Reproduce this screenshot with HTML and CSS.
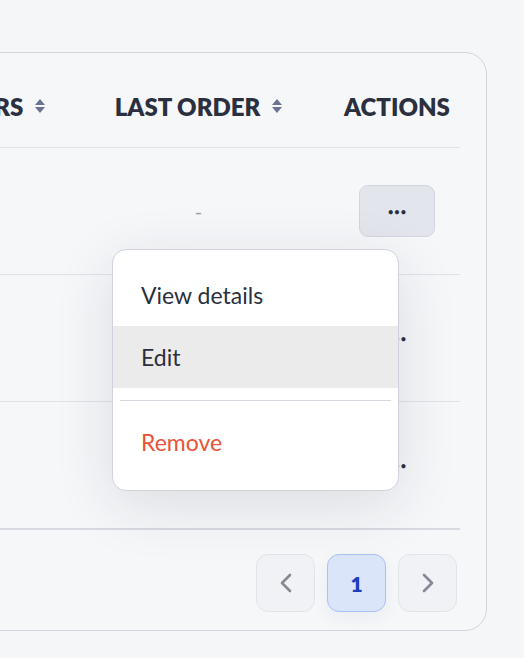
FILE: index.html
```html
<!DOCTYPE html>
<html lang="en">
<head>
    <meta charset="UTF-8">
    <meta name="viewport" content="width=device-width, initial-scale=1.0">
    <title>Customers</title>
    <link rel="stylesheet" href="styles.css">
</head>
<body>

<div class="page">
    <div class="card">
        <div class="table">
            <div class="row head">
                <div class="cell">Orders <svg class="sort" viewBox="0 0 10 16" width="10" height="16"><path d="M5 1 L10 7 H0 Z M5 15 L10 9 H0 Z" fill="#6b7391"/></svg></div>
                <div class="cell">Last order <svg class="sort" viewBox="0 0 10 16" width="10" height="16"><path d="M5 1 L10 7 H0 Z M5 15 L10 9 H0 Z" fill="#6b7391"/></svg></div>
                <div class="cell">Actions</div>
            </div>
            <div class="row">
                <div class="cell">0</div>
                <div class="cell muted">-</div>
                <div class="cell"><button class="more open">&bull;&bull;&bull;</button></div>
            </div>
            <div class="row">
                <div class="cell">3</div>
                <div class="cell muted">-</div>
                <div class="cell"><button class="more">&bull;&bull;&bull;</button></div>
            </div>
            <div class="row last">
                <div class="cell">1</div>
                <div class="cell muted">-</div>
                <div class="cell"><button class="more">&bull;&bull;&bull;</button></div>
            </div>
        </div>
        <div class="footer">
            <div class="pager">
                <button class="page-btn">
                    <svg viewBox="0 0 12 20" width="12" height="20"><path d="M10 2 L2 10 L10 18" fill="none" stroke="#878894" stroke-width="2.6" stroke-linecap="round" stroke-linejoin="round"/></svg>
                </button>
                <button class="page-btn active">1</button>
                <button class="page-btn">
                    <svg viewBox="0 0 12 20" width="12" height="20"><path d="M2 2 L10 10 L2 18" fill="none" stroke="#878894" stroke-width="2.6" stroke-linecap="round" stroke-linejoin="round"/></svg>
                </button>
            </div>
        </div>
    </div>

    <div class="menu">
        <div class="menu-item">View details</div>
        <div class="menu-item hover">Edit</div>
        <div class="menu-sep"></div>
        <div class="menu-item danger">Remove</div>
    </div>
</div>

</body>
</html>
```

FILE: styles.css
```css
* {
    box-sizing: border-box;
}
body {
    margin: 0;
    background-color: #f5f6f8;
    font-family: Lato, "Open Sans", sans-serif;
    color: #2b3040;
    overflow: hidden;
}
.page {
    position: relative;
    height: 658px;
    padding-top: 52px;
}
.card {
    width: 607px;
    margin-left: -120px;
    background-color: #f6f7f9;
    border: 1px solid #d3d6df;
    border-radius: 22px;
    padding: 0 26px;
}
.row {
    display: grid;
    grid-template-columns: 158px 267px 130px;
    height: 127px;
    align-items: center;
    border-bottom: 1px solid #dfe1e8;
}
.row.head {
    height: 95px;
    padding-top: 12px;
}
.row.last {
    height: 128px;
    border-bottom: 2px solid #d8dae2;
}
.cell {
    display: flex;
    align-items: center;
    justify-content: center;
    gap: 12px;
    font-size: 20px;
}
.head .cell {
    font-size: 24px;
    font-weight: 800;
    text-transform: uppercase;
}
.muted {
    color: #9aa0ad;
}
.more {
    width: 76px;
    height: 52px;
    border: 1px solid transparent;
    border-radius: 9px;
    background: transparent;
    color: #2b3040;
    font-size: 11px;
    font-family: inherit;
    padding: 0;
}
.more.open {
    background-color: #e2e5ec;
    border-color: #d3d6e0;
}
.footer {
    height: 100px;
    padding-top: 24px;
    display: flex;
    justify-content: flex-end;
}
.pager {
    display: flex;
    gap: 12px;
    margin-right: 3px;
}
.page-btn {
    width: 59px;
    height: 58px;
    border: 1px solid #e2e4ea;
    border-radius: 12px;
    background-color: #f1f2f5;
    display: flex;
    align-items: center;
    justify-content: center;
    font-family: inherit;
    padding: 0;
}
.page-btn.active {
    background-color: #dbe5fa;
    border-color: #a8c0f4;
    color: #1c3fbe;
    font-size: 21px;
    font-weight: 800;
    box-shadow: 0 6px 18px rgba(30, 40, 80, 0.05);
}
.menu {
    position: absolute;
    left: 112px;
    top: 249px;
    width: 287px;
    background-color: #fff;
    border: 1px solid #d0d3de;
    border-radius: 14px;
    padding: 14px 0 17px;
    box-shadow: 0 14px 60px rgba(30, 35, 60, 0.12);
}
.menu-item {
    height: 62px;
    display: flex;
    align-items: center;
    padding-left: 28px;
    font-size: 23px;
    color: #2b3040;
}
.menu-item.hover {
    background-color: #ebebeb;
}
.menu-item.danger {
    color: #e8533a;
}
.menu-sep {
    height: 1px;
    background-color: #d6d8df;
    margin: 12px 7px 10px;
}
```
